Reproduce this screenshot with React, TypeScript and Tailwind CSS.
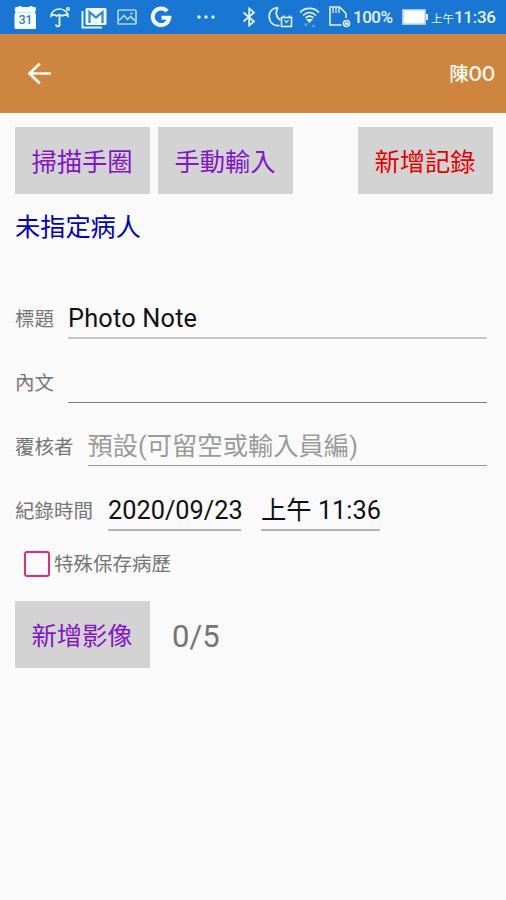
import type { ReactNode } from "react";
import clsx from "clsx";

type ButtonProps = {
  children: ReactNode;
  className?: string;
};

const ActionButton = ({ children, className }: ButtonProps) => (
  <button
    className={clsx(
      "h-[67px] w-[135px] shrink-0 bg-[#d3d3d3] pt-[5px] pr-px text-[25.3px] leading-none",
      className ?? "text-[#8216c8]"
    )}
  >
    {children}
  </button>
);

type RowProps = {
  label: string;
  children: ReactNode;
};

const FormRow = ({ label, children }: RowProps) => (
  <div className="flex h-16 items-start">
    <span className="h-16 shrink-0 whitespace-nowrap pt-[2px] text-[19.5px] leading-[62px] text-[#757575]">
      {label}
    </span>
    {children}
  </div>
);

type FieldProps = {
  children?: ReactNode;
  className: string;
};

const Field = ({ children, className }: FieldProps) => (
  <div className={clsx("whitespace-pre pt-[14px] text-[25.3px] leading-[36px]", className)}>
    {children}
  </div>
);

const StatusBar = () => (
  <div className="flex h-[34px] items-center bg-[#1976d2] pl-[14px] text-[#e3f4fb]">
    {/* calendar */}
    <svg width="23" height="25" viewBox="0 0 23 25" className="shrink-0">
      <path d="M1.500 2h3V1h3v1h8V1h3v1h3l.5 3-1 2.500 1 2V23l-.5 1H1l-.5-1V9.500l1-2-1-2.500z" fill="#f4fbff" />
      <path d="M2 7.500h19" stroke="#d5e6f3" strokeWidth="1" />
      <text x="11.500" y="19" textAnchor="middle" fontSize="12" fontWeight="500" fill="#2f7cb5">
        31
      </text>
    </svg>
    {/* umbrella */}
    <svg width="21" height="22" viewBox="0 0 21 22" fill="none" stroke="currentColor" className="ml-[13px] shrink-0">
      <path d="M1 10C2 5 6 3 9.500 3s8 2 8.500 7c-2-1.500-4-1.500-5.500 0-2-1.500-4-1.500-6 0C5 8.500 3 8.500 1 10z" strokeWidth="1.700" />
      <path d="M9.500 10v8.500c0 2.500-3.500 2.500-3.500 0" strokeWidth="1.900" />
      <circle cx="18" cy="3" r="1.300" strokeWidth="1.500" />
    </svg>
    {/* mail */}
    <svg width="26" height="23" viewBox="0 0 26 23" className="ml-[10px] shrink-0">
      <path d="M1.500 5v16.500H21" fill="none" stroke="currentColor" strokeWidth="2" />
      <rect x="4.500" y="2" width="21" height="17" rx="1.500" fill="#eefaff" />
      <path d="M8.500 17V6l6.500 5.500L21.500 6v11" fill="none" stroke="#3584c8" strokeWidth="2.200" />
    </svg>
    {/* picture */}
    <svg width="20" height="18" viewBox="0 0 20 18" fill="none" stroke="#a9d8ee" strokeWidth="1.700" className="ml-[10px] shrink-0">
      <rect x="1" y="2" width="18" height="14" rx="1" />
      <path d="M2 12.500l5-5 3.500 4 3-3 5 4.500M13 5.500h3" />
    </svg>
    {/* google */}
    <svg width="22" height="22" viewBox="0 0 22 22" fill="none" stroke="#f2fbff" strokeWidth="4" className="ml-[13px] shrink-0">
      <path d="M17.200 5.200A8.300 8.300 0 1 0 19.300 11.700H11.500" />
    </svg>
    {/* more notifications */}
    <svg width="20" height="6" viewBox="0 0 20 6" fill="currentColor" className="ml-[24px] shrink-0">
      <circle cx="3" cy="3" r="1.700" />
      <circle cx="10" cy="3" r="1.700" />
      <circle cx="17" cy="3" r="1.700" />
    </svg>
    {/* bluetooth */}
    <svg width="14" height="20" viewBox="0 0 14 20" fill="none" stroke="currentColor" strokeWidth="1.800" className="ml-[26px] shrink-0">
      <path d="M1.500 5.500l10.500 9L7.200 18.500v-17L12 5.500l-10.500 9" />
    </svg>
    {/* do not disturb */}
    <svg width="25" height="24" viewBox="0 0 25 24" fill="none" stroke="currentColor" className="ml-[12px] shrink-0">
      <path d="M10 2.500C3 3.500 1 8 1.200 12c.3 6 5.300 9.500 10.300 8.500M10 2.500C7 7 8 12.500 12.500 15" strokeWidth="1.700" />
      <rect x="13.500" y="12.500" width="10" height="9" strokeWidth="1.600" />
      <path d="M16.500 15l2 2.500 2-2.500" strokeWidth="1.200" />
      <path d="M15.500 10.500v2M21.500 10.500v2" strokeWidth="1.600" />
    </svg>
    {/* wifi */}
    <svg width="21" height="24" viewBox="0 0 21 24" fill="none" stroke="currentColor" strokeWidth="1.700" className="ml-[6px] shrink-0">
      <path d="M1 7.500C6 2 15 2 20 7.500M4 10.500c4-4 9-4 13 0M6.500 13c2.500-2.500 5.500-2.500 8 0" />
      <path d="M7 14h7l-3.500 4z" fill="currentColor" stroke="none" />
      <path d="M4.500 18.500h4.500L7 22zM12.500 22l2-3 2 3z" fill="#5ba7ee" stroke="none" />
    </svg>
    {/* sd card */}
    <svg width="22" height="24" viewBox="0 0 22 24" fill="none" stroke="currentColor" strokeWidth="1.600" className="ml-[9px] shrink-0">
      <path d="M12.500 20H1V2h9.500l6.500 6.500V13" />
      <path d="M4 3v5M7 3v5M10 3v5" strokeWidth="1.300" />
      <circle cx="17.500" cy="18.500" r="3" />
      <circle cx="17.500" cy="18.500" r=".8" />
    </svg>
    <span className="ml-[2px] w-[43px] shrink-0 pt-px text-[17px] font-medium leading-none tracking-[-0.5px]">
      100%
    </span>
    {/* battery */}
    <svg width="28" height="18" viewBox="0 0 28 18" className="ml-[5px] shrink-0">
      <rect x="1" y="1" width="24" height="16" fill="#9bcbef" />
      <rect x="2.500" y="2.500" width="21" height="13" fill="#fff" />
      <path d="M25 6h2v6h-2z" fill="#e3f4fb" />
    </svg>
    <span className="ml-[2px] flex items-baseline whitespace-nowrap leading-none">
      <span className="text-[11.5px]">上午</span>
      <span className="text-[17px] font-medium tracking-[-0.3px]">11:36</span>
    </span>
  </div>
);

export default function App() {
  return (
    <div className="h-[900px] w-[506px] overflow-hidden bg-[#fafafa] font-['Roboto','Noto_Sans_CJK_TC',sans-serif]">
      <StatusBar />

      <header className="flex h-[79px] items-center justify-between bg-[#cd853f] pl-[27px] pr-[11px]">
        <svg width="25" height="24" viewBox="0 0 25 24" fill="none" stroke="#fffaf0" strokeWidth="2.700">
          <path d="M12.800 1.500L2.500 11.500l10.300 10M2.500 11.500H24" />
        </svg>
        <span className="pt-[3px] text-[19.5px] font-medium leading-none tracking-[-0.2px] text-[#fffaf0]">
          陳OO
        </span>
      </header>

      <main className="px-[15px] pt-[14px]">
        <div className="flex">
          <ActionButton>掃描手圈</ActionButton>
          <ActionButton className="ml-2 text-[#8216c8]">手動輸入</ActionButton>
          <ActionButton className="ml-[65px] text-[#e80000]">新增記錄</ActionButton>
        </div>
        <p className="mt-[15px] h-[78px] text-[25.2px] leading-[38px] text-[#0000c0]">未指定病人</p>

        <div>
          <FormRow label="標題">
            <Field className="ml-[14px] h-[52px] w-[419px] border-b-2 border-[#c6c6c6] tracking-[0.2px] text-[#111]">
              Photo Note
            </Field>
          </FormRow>
          <FormRow label="內文">
            <Field className="ml-[14px] h-[52px] w-[419px] border-b border-[#7d7d7d]" />
          </FormRow>
          <FormRow label="覆核者">
            <Field className="ml-[14px] h-[51px] w-[399px] border-b border-[#999] text-[#9b9b9b]">
              預設(可留空或輸入員編)
            </Field>
          </FormRow>
          <FormRow label="紀錄時間">
            <Field className="ml-[15px] h-[52px] w-[133px] border-b-2 border-[#b4b4b4] text-[#111]">
              2020/09/23
            </Field>
            <Field className="ml-[20px] h-[52px] w-[119px] border-b-2 border-[#b4b4b4] text-[#111]">
              上午 11:36
            </Field>
          </FormRow>
        </div>

        <label className="flex h-[58px] items-start pl-[9px] pt-[8px]">
          <span className="h-[26px] w-[26px] rounded-[3px] border-[2.5px] border-[#e62b78]" />
          <span className="ml-1 text-[19.5px] leading-[28px] text-[#757575]">特殊保存病歷</span>
        </label>

        <div className="flex items-center">
          <ActionButton>新增影像</ActionButton>
          <span className="ml-[22px] pt-[4px] text-[31px] leading-none text-[#757575]">0/5</span>
        </div>
      </main>
    </div>
  );
}
